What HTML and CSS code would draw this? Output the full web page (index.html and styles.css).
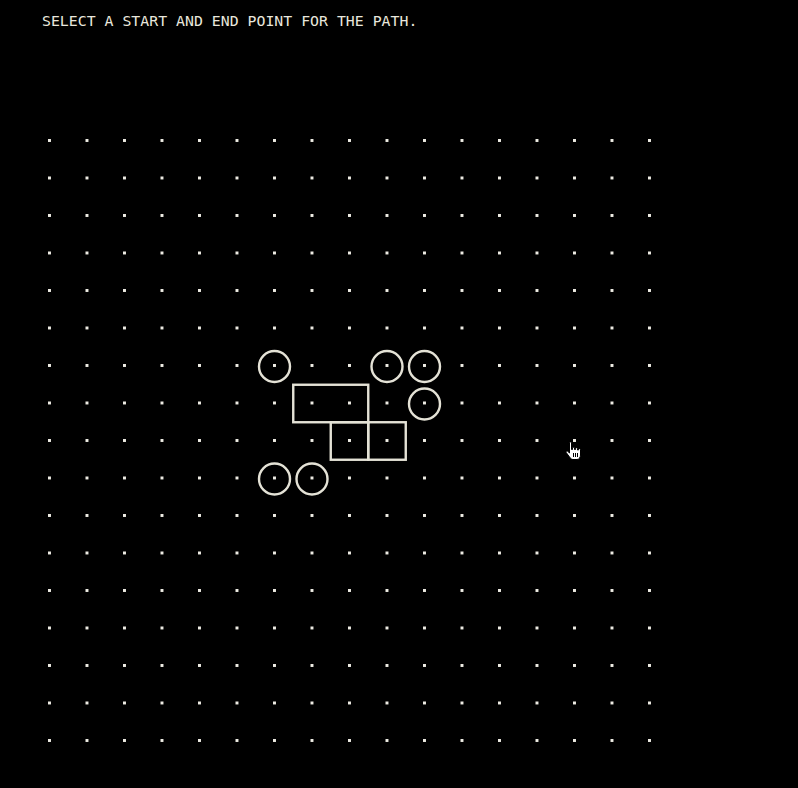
FILE: index.html
```html
<!DOCTYPE html>
<html>
<head>
<meta charset="utf-8">
<link rel="stylesheet" href="styles.css">
</head>
<body>
<main class="app">
  <p class="prompt">SELECT A START AND END POINT FOR THE PATH.</p>
  <div class="board">
    <svg class="board-svg" width="798" height="748" viewBox="0 40 798 748" xmlns="http://www.w3.org/2000/svg">
      <defs>
        <pattern id="dots" x="48" y="139" width="37.5" height="37.5" patternUnits="userSpaceOnUse">
          <rect x="0" y="0" width="3" height="3" class="dot"/>
        </pattern>
      </defs>
      <rect x="40" y="130" width="630" height="630" fill="url(#dots)"/>
      <g class="shapes">
        <circle cx="274.5" cy="366.5" r="15.5"/>
        <circle cx="387" cy="366.5" r="15.5"/>
        <circle cx="424.5" cy="366.5" r="15.5"/>
        <circle cx="424.5" cy="404" r="15.5"/>
        <circle cx="274.5" cy="479" r="15.5"/>
        <circle cx="312" cy="479" r="15.5"/>
        <rect x="293.25" y="384.75" width="75" height="37.5"/>
        <rect x="330.75" y="422.25" width="37.5" height="37.5"/>
        <rect x="368.25" y="422.25" width="37.5" height="37.5"/>
      </g>
    </svg>
    <svg class="cursor" width="18" height="20" viewBox="0 0 18 20" xmlns="http://www.w3.org/2000/svg">
      <path d="M4.5 1.5 C4.5 0.7 6.5 0.7 6.5 1.5 L6.5 8.5 L7.5 8.5 L7.5 6.8 C7.5 6 9.5 6 9.5 6.8 L9.5 8.5 L10.5 8.5 L10.5 7.3 C10.5 6.5 12.5 6.5 12.5 7.3 L12.5 9 L13.5 9 L13.5 8.3 C13.5 7.5 15.5 7.5 15.5 8.3 L15.5 14 C15.5 16.5 14 18.5 12 18.5 L8 18.5 C6.5 18.5 5.5 17.5 4.5 16 L1.2 11.5 C0.6 10.6 1.8 9.5 2.7 10.3 L4.5 12 Z" fill="#fff" stroke="#000" stroke-width="1"/>
      <path d="M8.5 12 V16 M10.5 12 V16 M12.5 12 V16" stroke="#000" stroke-width="1"/>
    </svg>
  </div>
</main>
</body>
</html>
```
FILE: styles.css
```css
html, body {
  margin: 0;
  padding: 0;
  background: #000;
}
.app {
  width: 798px;
  height: 788px;
  overflow: hidden;
  background: #000;
}
.prompt {
  margin: 0;
  height: 40px;
  box-sizing: border-box;
  padding: 12px 0 0 42px;
  font-family: "DejaVu Sans Mono", monospace;
  font-size: 14.85px;
  line-height: 18px;
  color: #e9e7dd;
  white-space: nowrap;
}
.board {
  position: relative;
  width: 798px;
  height: 748px;
}
.board-svg {
  display: block;
}
.dot {
  fill: #eeece4;
  shape-rendering: crispEdges;
}
.shapes circle,
.shapes rect {
  fill: none;
  stroke: #e4e2d6;
  stroke-width: 2.4;
}
.cursor {
  position: absolute;
  left: 565px;
  top: 401px;
}
```
